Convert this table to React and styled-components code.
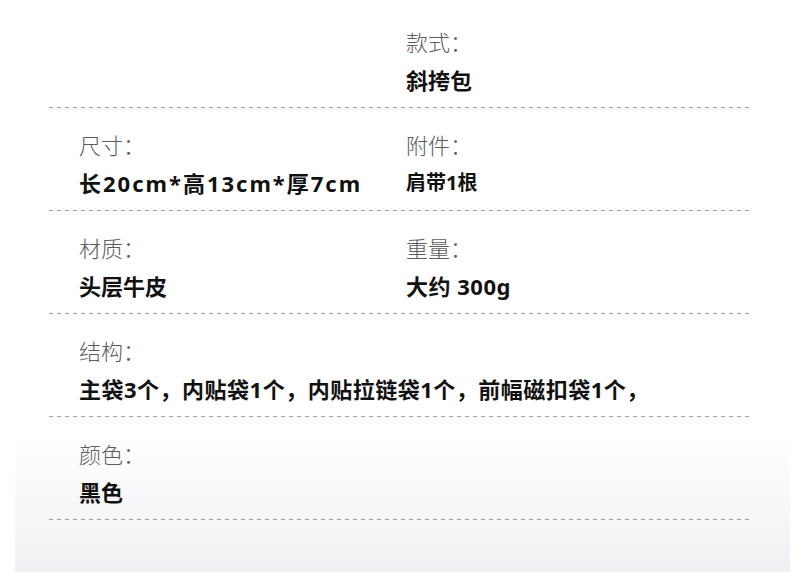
import React from "react";
import styled, { createGlobalStyle } from "styled-components";

const GlobalStyle = createGlobalStyle`
  html, body {
    margin: 0;
    padding: 0;
    background: #ffffff;
  }
  body {
    font-family: "Noto Sans CJK SC", "Noto Sans", sans-serif;
  }
`;

// 상품 정보 (행 단위)
const rows = [
  { left: null, right: { label: "款式：", value: "斜挎包" } },
  {
    left: { label: "尺寸：", value: "长20cm*高13cm*厚7cm", tracking: 2 },
    right: { label: "附件：", value: "肩带1根", small: true },
  },
  {
    left: { label: "材质：", value: "头层牛皮" },
    right: { label: "重量：", value: "大约 300g", tracking: 0.5 },
  },
  {
    full: {
      label: "结构：",
      value: "主袋3个，内贴袋1个，内贴拉链袋1个，前幅磁扣袋1个，",
      tracking: 0.5,
    },
  },
  { full: { label: "颜色：", value: "黑色" } },
];

const Field = ({ item }) => {
  if (!item) return <Cell />;
  return (
    <Cell>
      <Label>{item.label}</Label>
      <Value $small={item.small} $tracking={item.tracking}>
        {item.value}
      </Value>
    </Cell>
  );
};

const App = () => {
  return (
    <>
      <GlobalStyle />
      <Page>
        <Panel>
          <List>
            {rows.map((row, index) => (
              <Row key={index}>
                {row.full ? (
                  <Wide>
                    <Field item={row.full} />
                  </Wide>
                ) : (
                  <>
                    <Field item={row.left} />
                    <Field item={row.right} />
                  </>
                )}
              </Row>
            ))}
          </List>
        </Panel>
      </Page>
    </>
  );
};

export default App;

const Page = styled.div`
  width: 800px;
  height: 577px;
  background: #ffffff;
  padding: 0 10px 0 15px;
  box-sizing: border-box;
`;

const Panel = styled.div`
  height: 572px;
  padding: 5px 39px 0 34px;
  box-sizing: border-box;
  background: linear-gradient(
    180deg,
    #ffffff 0%,
    #ffffff 76%,
    #f7f8f9 88%,
    #eff0f3 100%
  );
`;

const List = styled.div`
  display: flex;
  flex-direction: column;
`;

const Row = styled.div`
  height: 103px;
  box-sizing: border-box;
  padding: 20px 0 0 30px;
  display: grid;
  grid-template-columns: 327px 1fr;
  background-image: repeating-linear-gradient(
    to right,
    #a0a0a0 0,
    #a0a0a0 4px,
    transparent 4px,
    transparent 8px
  );
  background-size: calc(100% + 2px) 1px;
  background-position: left bottom;
  background-repeat: no-repeat;
`;

const Wide = styled.div`
  grid-column: 1 / -1;
`;

const Cell = styled.div`
  display: flex;
  flex-direction: column;
`;

const Label = styled.div`
  font-size: 22px;
  line-height: 32px;
  font-weight: 300;
  color: #5c5c5c;
`;

const Value = styled.div`
  margin-top: 5px;
  font-family: "Noto Sans", "Noto Sans CJK SC", sans-serif;
  font-size: ${(props) => (props.$small ? "20px" : "22px")};
  letter-spacing: ${(props) => props.$tracking || 0}px;
  line-height: 36px;
  font-weight: 700;
  color: #111111;
  white-space: nowrap;
`;
